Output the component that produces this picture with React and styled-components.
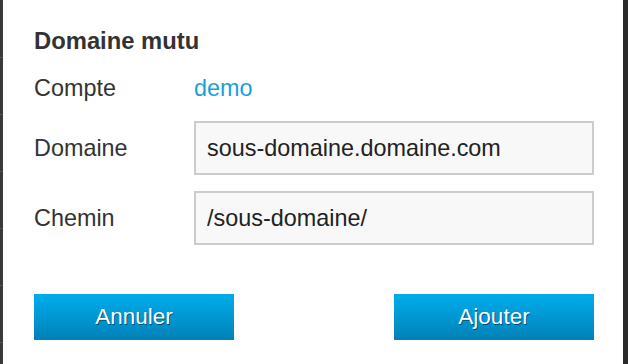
import React from "react";
import styled, { createGlobalStyle } from "styled-components";

const GlobalStyle = createGlobalStyle`
    html, body {
        margin: 0;
        padding: 0;
        background: #2b2b2b;
    }
    body {
        font-family: "Liberation Sans", Arial, sans-serif;
    }
`;

const Screen = styled.div`
    display: flex;
    width: 628px;
    height: 364px;
    overflow: hidden;
`;

const SideStrip = styled.div`
    width: ${props => props.width}px;
    flex-shrink: 0;
    background: ${props => props.lined
        ? "repeating-linear-gradient(to bottom, #3a3a3a 0px, #3a3a3a 56px, #555 56px, #555 57px)"
        : "#2a2a2a"};
    background-position: 0 ${props => props.lined ? "1px" : "0"};
`;

const Dialog = styled.div`
    flex: 1;
    background: #fff;
    padding: 26px 29px 24px 31px;
    display: flex;
    flex-direction: column;
    color: #333;
`;

const Title = styled.h2`
    margin: 0;
    font-size: 23.8px;
    line-height: 30px;
    font-weight: bold;
    color: #333;
`;

const Row = styled.div`
    display: flex;
    align-items: center;
    margin-top: ${props => props.gap}px;
    height: ${props => props.height}px;
`;

const Label = styled.span`
    width: 160px;
    font-size: 23.4px;
    color: #333;
`;

const Account = styled.span`
    font-size: 23.4px;
    color: #1a9fdc;
`;

const Field = styled.input`
    box-sizing: border-box;
    width: 400px;
    height: 54px;
    border: 2px solid #cccccc;
    background: #f8f8f8;
    padding: 0 11px;
    font-family: "Liberation Sans", Arial, sans-serif;
    font-size: 23.4px;
    color: #222;
    outline: none;
`;

const Actions = styled.div`
    display: flex;
    justify-content: space-between;
    margin-top: 49px;
`;

const ActionButton = styled.button`
    width: 200px;
    height: 46px;
    border: none;
    border-radius: 0;
    background: linear-gradient(to bottom, #00aceb 0%, #0097d3 50%, #0081b5 100%);
    color: #fff;
    font-family: "Liberation Sans", Arial, sans-serif;
    font-size: 22.5px;
    text-shadow: 1px 1px 0 rgba(0, 0, 0, 0.45);
    cursor: pointer;
    padding: 0;
`;

export default function App() {
    return (
        <Screen>
            <GlobalStyle />
            <SideStrip width={3} lined />
            <Dialog>
                <Title>Domaine mutu</Title>
                <Row gap={15} height={34}>
                    <Label>Compte</Label>
                    <Account>demo</Account>
                </Row>
                <Row gap={16} height={54}>
                    <Label>Domaine</Label>
                    <Field defaultValue="sous-domaine.domaine.com" />
                </Row>
                <Row gap={16} height={54}>
                    <Label>Chemin</Label>
                    <Field defaultValue="/sous-domaine/" />
                </Row>
                <Actions>
                    <ActionButton>Annuler</ActionButton>
                    <ActionButton>Ajouter</ActionButton>
                </Actions>
            </Dialog>
            <SideStrip width={5} />
        </Screen>
    );
}
